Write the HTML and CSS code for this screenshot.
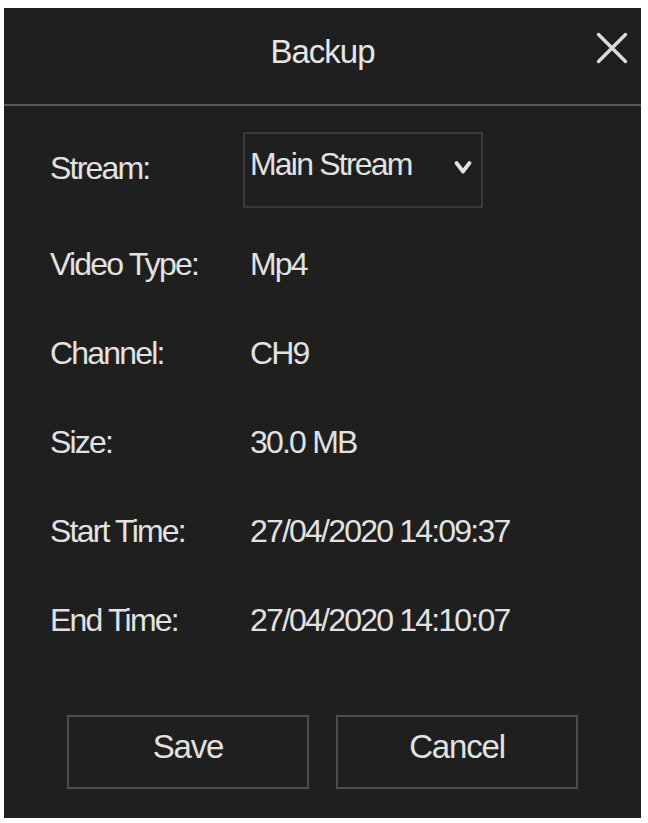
FILE: index.html
```html
<!DOCTYPE html>
<html lang="en">
<head>
<meta charset="utf-8">
<title>Backup</title>
<link rel="stylesheet" href="styles.css">
</head>
<body>
<div class="dialog">
  <div class="header">
    <span class="title">Backup</span>
    <button class="close" aria-label="Close">
      <svg width="32" height="32" viewBox="0 0 32 32"><path d="M2.5 2.5 L29.5 29.5 M29.5 2.5 L2.5 29.5" stroke="#dcdcdc" stroke-width="3.4" stroke-linecap="round" fill="none"/></svg>
    </button>
  </div>
  <div class="body">
    <div class="row row-first">
      <span class="label label-first">Stream:</span>
      <div class="select">
        <span class="select-text">Main Stream</span>
        <svg class="chevron" width="20" height="16" viewBox="0 0 20 16"><polyline points="3.5,4 10,12.5 16.5,4" stroke="#e2e2e2" stroke-width="3.8" stroke-linecap="round" stroke-linejoin="round" fill="none"/></svg>
      </div>
    </div>
    <div class="row"><span class="label">Video Type:</span><span class="value">Mp4</span></div>
    <div class="row"><span class="label">Channel:</span><span class="value">CH9</span></div>
    <div class="row"><span class="label">Size:</span><span class="value">30.0 MB</span></div>
    <div class="row"><span class="label">Start Time:</span><span class="value">27/04/2020 14:09:37</span></div>
    <div class="row"><span class="label">End Time:</span><span class="value">27/04/2020 14:10:07</span></div>
  </div>
  <div class="actions">
    <button class="btn">Save</button>
    <button class="btn">Cancel</button>
  </div>
</div>
</body>
</html>
```
FILE: styles.css
```css
html, body {
  margin: 0;
  padding: 0;
  background: #ffffff;
}

body {
  font-family: "Liberation Sans", Arial, sans-serif;
}

.dialog {
  margin: 8px 0 0 4px;
  width: 637px;
  height: 810px;
  background: #1f1f1f;
  color: #e2e2e2;
  display: flex;
  flex-direction: column;
}

.header {
  position: relative;
  height: 96px;
  border-bottom: 2px solid #5a5a5a;
  display: flex;
  align-items: center;
  justify-content: center;
}

.title {
  font-size: 33px;
  letter-spacing: -1px;
  line-height: 1;
  margin-bottom: 10px;
  color: #e6e6e6;
}

.close {
  position: absolute;
  right: 13px;
  top: 24px;
  width: 32px;
  height: 32px;
  padding: 0;
  border: 0;
  background: transparent;
  display: block;
}

.close svg {
  display: block;
}

.body {
  padding: 26px 0 0 46px;
  display: flex;
  flex-direction: column;
}

.row {
  display: flex;
  align-items: center;
  height: 89px;
}

.row-first {
  height: 76px;
  margin-bottom: 11px;
}

.label {
  width: 193px;
  font-size: 32px;
  letter-spacing: -1.8px;
  line-height: 1;
}

.label-first {
  margin-bottom: 4px;
}

.value {
  padding-left: 7px;
  font-size: 32px;
  letter-spacing: -1.8px;
  line-height: 1;
}

.select {
  box-sizing: border-box;
  width: 240px;
  height: 76px;
  border: 2px solid #3a3a3a;
  display: flex;
  align-items: center;
  justify-content: space-between;
  padding: 0 8px 0 5px;
}

.select-text {
  font-size: 32px;
  letter-spacing: -1.8px;
  line-height: 1;
  margin-bottom: 12px;
}

.chevron {
  display: block;
  margin-bottom: 6px;
}

.actions {
  margin-top: 51px;
  display: flex;
  justify-content: center;
  gap: 27px;
}

.btn {
  box-sizing: border-box;
  width: 242px;
  height: 74px;
  border: 2px solid #4c4c4c;
  background: transparent;
  color: #e2e2e2;
  font-family: "Liberation Sans", Arial, sans-serif;
  font-size: 33px;
  letter-spacing: -1.2px;
  line-height: 1;
  padding: 0 0 11px;
}
```
